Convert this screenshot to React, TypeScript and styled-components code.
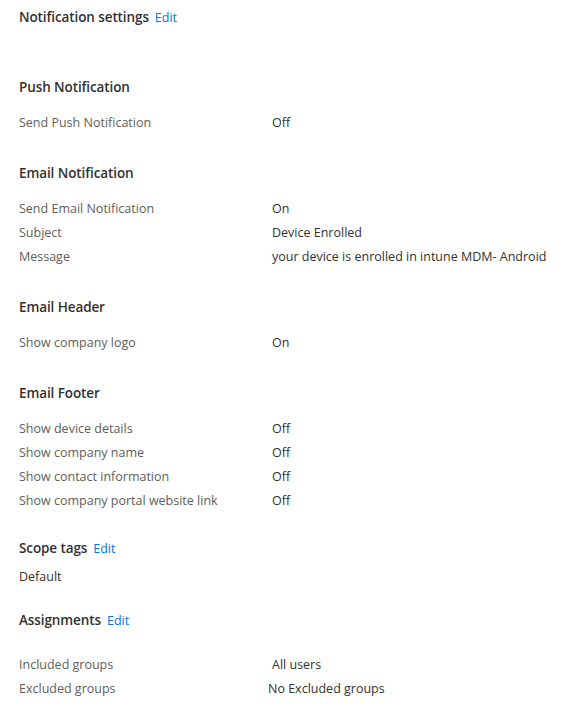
import React from "react";
import styled, { createGlobalStyle } from "styled-components";

const Global = createGlobalStyle`
  html, body { margin: 0; padding: 0; background: #ffffff; }
  body { font-family: "Segoe UI", "Open Sans", "Noto Sans", sans-serif; color: #323130; }
`;

const Page = styled.div`
  display: flex;
  flex-direction: column;
  padding: 7px 0 0 19px;
  width: 552px;
`;

const HeadingRow = styled.div<{ $mt?: number; $mb?: number }>`
  display: flex;
  align-items: baseline;
  gap: 6px;
  height: 20px;
  line-height: 20px;
  margin-top: ${(p) => p.$mt ?? 0}px;
  margin-bottom: ${(p) => p.$mb ?? 0}px;
`;

const Heading = styled.span`
  font-size: 13.5px;
  font-weight: 600;
  color: #323130;
  letter-spacing: -0.1px;
`;

const EditLink = styled.a`
  font-size: 12.5px;
  color: #0078d4;
  text-decoration: none;
  cursor: pointer;
`;

const Rows = styled.div`
  display: flex;
  flex-direction: column;
`;

const Row = styled.div`
  display: grid;
  grid-template-columns: 253px 1fr;
  height: 24px;
  line-height: 24px;
  font-size: 12.5px;
`;

const Label = styled.span`
  color: #605e5c;
  white-space: nowrap;
`;

const Value = styled.span<{ $shift?: number }>`
  color: #323130;
  white-space: nowrap;
  margin-left: ${(p) => p.$shift ?? 0}px;
`;

const Plain = styled.div`
  font-size: 12.5px;
  color: #323130;
  height: 20px;
  line-height: 20px;
  margin-top: 9px;
`;

type RowData = { label: string; value: string; shift?: number };

const Section: React.FC<{ title: string; mt: number; rows: RowData[] }> = ({ title, mt, rows }) => (
  <>
    <HeadingRow $mt={mt} $mb={14}>
      <Heading>{title}</Heading>
    </HeadingRow>
    <Rows>
      {rows.map((r) => (
        <Row key={r.label}>
          <Label>{r.label}</Label>
          <Value $shift={r.shift}>{r.value}</Value>
        </Row>
      ))}
    </Rows>
  </>
);

export default function App() {
  return (
    <>
      <Global />
      <Page>
        <HeadingRow>
          <Heading>Notification settings</Heading>
          <EditLink>Edit</EditLink>
        </HeadingRow>
        <Section title="Push Notification" mt={50} rows={[{ label: "Send Push Notification", value: "Off" }]} />
        <Section
          title="Email Notification"
          mt={28}
          rows={[
            { label: "Send Email Notification", value: "On" },
            { label: "Subject", value: "Device Enrolled" },
            { label: "Message", value: "your device is enrolled in intune MDM- Android" },
          ]}
        />
        <Section title="Email Header" mt={28} rows={[{ label: "Show company logo", value: "On" }]} />
        <Section
          title="Email Footer"
          mt={28}
          rows={[
            { label: "Show device details", value: "Off" },
            { label: "Show company name", value: "Off" },
            { label: "Show contact information", value: "Off" },
            { label: "Show company portal website link", value: "Off" },
          ]}
        />
        <HeadingRow $mt={25}>
          <Heading>Scope tags</Heading>
          <EditLink>Edit</EditLink>
        </HeadingRow>
        <Plain>Default</Plain>
        <HeadingRow $mt={23} $mb={23}>
          <Heading>Assignments</Heading>
          <EditLink>Edit</EditLink>
        </HeadingRow>
        <Rows>
          <Row>
            <Label>Included groups</Label>
            <Value>All users</Value>
          </Row>
          <Row>
            <Label>Excluded groups</Label>
            <Value $shift={-4}>No Excluded groups</Value>
          </Row>
        </Rows>
      </Page>
    </>
  );
}
